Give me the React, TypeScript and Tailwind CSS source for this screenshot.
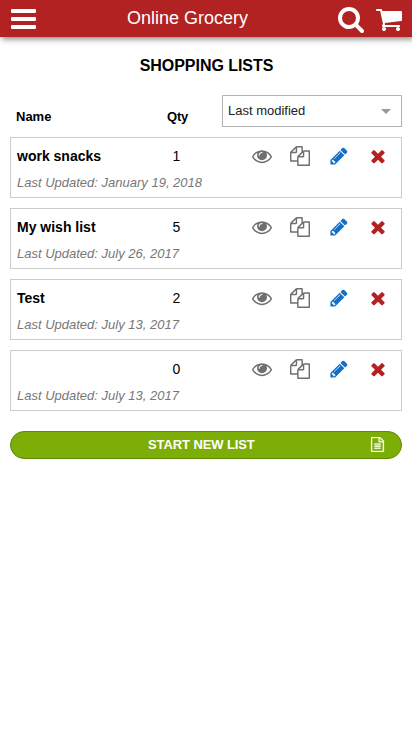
type IconProps = { d: string; className: string };

function Icon({ d, className }: IconProps) {
  return (
    <svg viewBox="0 0 1792 1792" fill="currentColor" className={className} aria-hidden="true">
      <path d={d} />
    </svg>
  );
}

const EYE =
  "M1664 960q-152-236-381-353 61 104 61 225 0 185-131.5 316.5t-316.5 131.5-316.5-131.5-131.5-316.5q0-121 61-225-229 117-381 353 133 205 333.5 326.5t434.5 121.5 434.5-121.5 333.5-326.5zm-720-384q0-20-14-34t-34-14q-125 0-214.5 89.5t-89.5 214.5q0 20 14 34t34 14 34-14 14-34q0-86 61-147t147-61q20 0 34-14t14-34zm848 384q0 34-20 69-140 230-376.5 368.5t-499.5 138.5-499.5-139-376.5-368q-20-35-20-69t20-69q140-229 376.5-368t499.5-139 499.5 139 376.5 368q20 35 20 69z";
const COPY =
  "M1696 384q40 0 68 28t28 68v1216q0 40-28 68t-68 28h-960q-40 0-68-28t-28-68v-288h-544q-40 0-68-28t-28-68v-672q0-40 20-88t48-76l408-408q28-28 76-48t88-20h416q40 0 68 28t28 68v328q68-40 128-40h416zm-544 213l-299 299h299v-299zm-640-384l-299 299h299v-299zm196 647l316-316v-416h-384v416q0 40-28 68t-68 28h-416v640h512v-256q0-40 20-88t48-76zm956 804v-1152h-384v416q0 40-28 68t-68 28h-416v640h896z";
const PENCIL =
  "M491 1536l91-91-235-235-91 91v107h128v128h107zm523-928q0-22-22-22-10 0-17 7l-542 542q-7 7-7 17 0 22 22 22 10 0 17-7l542-542q7-7 7-17zm-54-192l416 416-832 832h-416v-416zm683 96q0 53-37 90l-166 166-416-416 166-165q36-38 90-38 53 0 91 38l235 234q37 39 37 91z";
const TIMES =
  "M1490 1322q0 40-28 68l-136 136q-28 28-68 28t-68-28l-294-294-294 294q-28 28-68 28t-68-28l-136-136q-28-28-28-68t28-68l294-294-294-294q-28-28-28-68t28-68l136-136q28-28 68-28t68 28l294 294 294-294q28-28 68-28t68 28l136 136q28 28 28 68t-28 68l-294 294 294 294q28 28 28 68z";
const FILE_TEXT =
  "M1596 380q28 28 48 76t20 88v1152q0 40-28 68t-68 28h-1344q-40 0-68-28t-28-68v-1600q0-40 28-68t68-28h896q40 0 88 20t76 48zm-444-244v376h376q-10-29-22-41l-313-313q-12-12-41-22zm384 1528v-1024h-416q-40 0-68-28t-28-68v-416h-768v1536h1280zm-1024-864q0-14 9-23t23-9h704q14 0 23 9t9 23v64q0 14-9 23t-23 9h-704q-14 0-23-9t-9-23v-64zm736 224q14 0 23 9t9 23v64q0 14-9 23t-23 9h-704q-14 0-23-9t-9-23v-64q0-14 9-23t23-9h704zm0 256q14 0 23 9t9 23v64q0 14-9 23t-23 9h-704q-14 0-23-9t-9-23v-64q0-14 9-23t23-9h704z";
const SEARCH =
  "M1216 832q0-185-131.5-316.5t-316.5-131.5-316.5 131.5-131.5 316.5 131.5 316.5 316.5 131.5 316.5-131.5 131.5-316.5zm512 832q0 52-38 90t-90 38q-54 0-90-38l-343-342q-179 124-399 124-143 0-273.5-55.5t-225-150-150-225-55.5-273.5 55.5-273.5 150-225 225-150 273.5-55.5 273.5 55.5 225 150 150 225 55.5 273.5q0 220-124 399l343 343q37 37 37 90z";
const CART =
  "M704 1536q0 52-38 90t-90 38-90-38-38-90 38-90 90-38 90 38 38 90zm896 0q0 52-38 90t-90 38-90-38-38-90 38-90 90-38 90 38 38 90zm128-1088v512q0 24-16.5 42.5t-40.5 21.5l-1044 122q13 60 13 70 0 16-24 64h920q26 0 45 19t19 45-19 45-45 19h-1024q-26 0-45-19t-19-45q0-11 8-31.5t16-36 21.5-40 15.5-29.5l-177-823h-204q-26 0-45-19t-19-45 19-45 45-19h256q16 0 28.5 6.5t19.5 15.5 13 24.5 8 26 5.5 29.5 4.5 26h1201q26 0 45 19t19 45z";

const lists = [
  { name: "work snacks", qty: 1, updated: "January 19, 2018" },
  { name: "My wish list", qty: 5, updated: "July 26, 2017" },
  { name: "Test", qty: 2, updated: "July 13, 2017" },
  { name: "", qty: 0, updated: "July 13, 2017" },
];

export default function App() {
  return (
    <div className="min-h-screen bg-white font-['Liberation_Sans',Arial,sans-serif] text-black">
      <header className="flex h-[37px] items-center bg-[#b22222] text-white shadow-[2px_2px_6px_rgba(0,0,0,0.5)]">
        <button aria-label="Menu" className="ml-[11px] flex w-[25px] flex-col gap-1">
          <span className="h-1 rounded-[1px] bg-white" />
          <span className="h-1 rounded-[1px] bg-white" />
          <span className="h-1 rounded-[1px] bg-white" />
        </button>
        <h1 className="mb-0.5 ml-[91px] w-[210px] text-lg leading-[34px]">Online Grocery</h1>
        <button aria-label="Search">
          <Icon d={SEARCH} className="mt-px size-7" />
        </button>
        <button aria-label="Cart" className="ml-[9.5px]">
          <Icon d={CART} className="mt-px size-7" />
        </button>
      </header>

      <main className="px-2.5">
        <h2 className="mt-[19px] ml-px text-center text-base leading-5 font-bold tracking-[-0.05px]">SHOPPING LISTS</h2>
        <div className="mt-[19px] flex h-8">
          <span className="ml-1.5 w-[151px] pt-3.5 text-[13px] leading-4 font-bold">Name</span>
          <span className="w-[55px] pt-3.5 text-[13px] leading-4 font-bold tracking-[-0.2px]">Qty</span>
          <button className="flex flex-1 items-center justify-between border border-[#b4b4b4] pr-2.5 pl-[5px] text-[13px] text-[#222]">
            <span>Last modified</span>
            <svg viewBox="0 0 10 5" className="mt-px h-[5px] w-2.5 fill-[#999]">
              <path d="M0 0h10L5 5z" />
            </svg>
          </button>
        </div>

        <ul className="mt-2.5 flex flex-col gap-2.5">
          {lists.map((list, i) => (
            <li key={i} className="h-[61px] border border-[#ccc] pl-1.5">
              <div className="flex h-9 items-center">
                <span className="w-[155.5px] text-sm font-bold">{list.name}</span>
                <span className="w-[79.5px] text-sm">{list.qty}</span>
                <button aria-label="View list">
                  <Icon d={EYE} className="size-5 text-[#6f6f6f]" />
                </button>
                <button aria-label="Copy list" className="ml-[18px]">
                  <Icon d={COPY} className="size-5 text-[#6f6f6f]" />
                </button>
                <button aria-label="Edit list" className="ml-[18.5px]">
                  <Icon d={PENCIL} className="size-5 text-[#1470c4]" />
                </button>
                <button aria-label="Delete list" className="ml-[19px]">
                  <Icon d={TIMES} className="size-5 text-[#b22222]" />
                </button>
              </div>
              <p className="pt-px text-[13px] leading-4 text-[#777] italic">Last Updated: {list.updated}</p>
            </li>
          ))}
        </ul>

        <button className="mt-5 flex h-7 w-full items-center rounded-full border border-[#5f8a05] bg-[#7dae08] text-white">
          <span className="ml-[137px] w-[222px] text-left text-[13px] font-bold tracking-[-0.1px]">START NEW LIST</span>
          <Icon d={FILE_TEXT} className="mb-px size-[15px] stroke-current stroke-[30]" />
        </button>
      </main>
    </div>
  );
}
